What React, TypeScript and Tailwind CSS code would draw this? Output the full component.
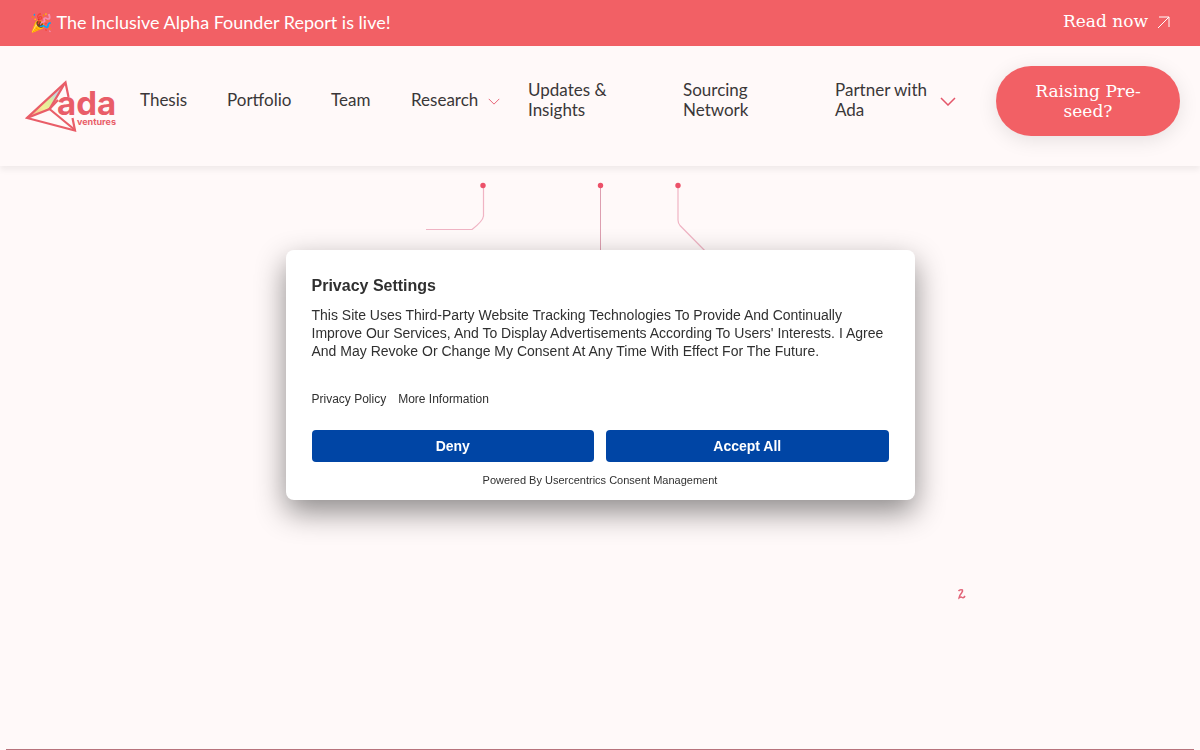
import React from 'react';

const plainLinks = [
    { label: 'Thesis', width: 'w-[47px]' },
    { label: 'Portfolio', width: 'w-16' },
    { label: 'Team', width: 'w-10' },
];

const Logo: React.FC = () => (
    <svg viewBox="0 0 92 52" className="h-[52px] w-[92px]" role="img" aria-label="Ada Ventures">
        <defs>
            <linearGradient id="facet" x1="0" y1="1" x2="1" y2="0">
                <stop offset="0.1" stopColor="#f7b48c" />
                <stop offset="0.35" stopColor="#f3ee98" />
                <stop offset="0.55" stopColor="#d9f09c" />
                <stop offset="0.7" stopColor="#c3d8df" />
                <stop offset="1" stopColor="#e9b6c4" />
            </linearGradient>
        </defs>
        <path d="M2 38 L40 2 L24 30 Z" fill="url(#facet)" />
        <g fill="none" stroke="#e95d68" strokeWidth="2.2" strokeLinejoin="miter">
            <path d="M43.5 17 L40.5 2.5 L2 38 L50 50.5 L47.5 38" />
            <path d="M40 3 L24.5 29 L2 38" />
            <path d="M33 20 L24.5 29 L50 50" />
        </g>
        <text x="32" y="35" fill="#e95d68" fontFamily="Inter, sans-serif" fontWeight="700" fontSize="33">ada</text>
        <text x="52" y="45" fill="#e95d68" fontFamily="Inter, sans-serif" fontWeight="700" fontSize="9">ventures</text>
    </svg>
);

const Chevron: React.FC<{ className: string; strokeWidth: number }> = ({ className, strokeWidth }) => (
    <svg viewBox="0 0 16 9" className={className} fill="none" stroke="#e4566a" strokeWidth={strokeWidth} aria-hidden="true">
        <path d="M1 1 L8 8 L15 1" />
    </svg>
);

const Banner: React.FC = () => (
    <div className="flex h-[46px] items-center justify-between bg-[#f26065] px-[30px] pb-[2px] text-white">
        <p className="font-['Lato','Noto_Color_Emoji',sans-serif] text-[18px]">🎉 The Inclusive Alpha Founder Report is live!</p>
        <a href="#report" className="flex items-center gap-[9px] font-['DejaVu_Serif',serif] text-[17px]">
            Read now
            <svg viewBox="0 0 13 13" className="size-[13px]" fill="none" stroke="currentColor" aria-hidden="true">
                <path d="M1 12 L12 1 M2 1 H12 V11" />
            </svg>
        </a>
    </div>
);

const Header: React.FC = () => (
    <header className="relative flex h-[120px] items-start bg-[#fff9f9] pl-[25px] pr-5 shadow-[0_4px_6px_rgba(0,0,0,0.06)]">
        <a href="#home" className="mt-[34px] mr-[23px] shrink-0">
            <Logo />
        </a>
        <nav className="mt-[34px] flex h-10 flex-1 items-center gap-10 font-['Lato',sans-serif] text-[17px] leading-5 text-[#3a3738]">
            {plainLinks.map((link) => (
                <a key={link.label} href={`#${link.label.toLowerCase()}`} className={`${link.width} shrink-0`}>
                    {link.label}
                </a>
            ))}
            <button type="button" className="flex w-[77px] shrink-0 items-center gap-[10px]">
                Research
                <Chevron className="mt-[2px] h-[7px] w-3 shrink-0" strokeWidth={1.2} />
            </button>
            <a href="#updates" className="w-[115px] shrink-0">Updates &amp;<br />Insights</a>
            <a href="#sourcing" className="w-28 shrink-0">Sourcing<br />Network</a>
            <button type="button" className="flex flex-1 items-center justify-between text-left">
                <span>Partner with<br />Ada</span>
                <Chevron className="mt-[2px] h-[9px] w-4 shrink-0" strokeWidth={1.5} />
            </button>
        </nav>
        <a
            href="#raise"
            className="mt-5 ml-10 flex h-[70px] w-[184px] shrink-0 items-center justify-center rounded-full bg-[#f26065] text-center font-['DejaVu_Serif',serif] text-[17px] leading-5 text-white shadow-[0_4px_20px_rgba(0,0,0,0.1)]"
        >
            Raising Pre-<br />seed?
        </a>
    </header>
);

const Hero: React.FC = () => (
    <main className="relative flex flex-1 flex-col justify-between">
        <svg viewBox="0 0 640 320" className="mx-auto mt-[14px] h-80 w-[640px]" fill="none" aria-hidden="true">
            <g stroke="#f0b4c4" strokeWidth="1.2">
                <path d="M203.5 6 V36 Q203 41 192 49.5 H146" />
                <path d="M398 6 V40 Q398 43 400 45.5 L430 76" />
                <path d="M320.5 6 V100" stroke="#dd9fb0" strokeWidth="1" />
            </g>
            <g fill="#ec5169">
                <circle cx="203" cy="5.5" r="2.7" />
                <circle cx="320.5" cy="5.5" r="2.7" />
                <circle cx="398" cy="5.5" r="2.7" />
            </g>
        </svg>
        <svg
            viewBox="0 0 9 12"
            className="absolute top-[422px] left-[80%] ml-[-3px] h-3 w-[9px]"
            fill="none"
            stroke="#e26478"
            strokeWidth="1.5"
            aria-hidden="true"
        >
            <path d="M1.5 3 Q3 1 5.5 2 Q6 3 4.5 5 Q2 8 2 10 Q4 8.5 5 9.5 Q6.5 10.5 8 8" />
        </svg>
        <hr className="mx-[6px] h-px border-0 bg-[#b8737c]" />
    </main>
);

const PrivacyDialog: React.FC = () => (
    <div className="fixed inset-0 flex items-center justify-center">
        <div
            role="dialog"
            aria-labelledby="privacy-title"
            className="w-[629px] rounded-lg bg-white px-[26px] pt-[26px] pb-3 font-['Liberation_Sans',sans-serif] text-[#303030] shadow-[0_12px_30px_rgba(0,0,0,0.45)]"
        >
            <h2 id="privacy-title" className="text-base leading-5 font-bold">Privacy Settings</h2>
            <p className="mt-[10px] text-sm leading-[18px]">
                This Site Uses Third-Party Website Tracking Technologies To Provide And Continually Improve Our Services, And To Display Advertisements According To Users' Interests. I Agree And May Revoke Or Change My Consent At Any Time With Effect For The Future.
            </p>
            <div className="mt-[31px] flex gap-3 text-xs leading-4">
                <a href="#privacy">Privacy Policy</a>
                <a href="#more">More Information</a>
            </div>
            <div className="mt-[23px] grid grid-cols-2 gap-3 text-sm font-bold text-white">
                <button type="button" className="h-8 rounded bg-[#0045a5]">Deny</button>
                <button type="button" className="h-8 rounded bg-[#0045a5]">Accept All</button>
            </div>
            <p className="mt-[10px] text-center text-[11px] leading-4">
                Powered By <a href="#usercentrics">Usercentrics Consent Management</a>
            </p>
        </div>
    </div>
);

const App: React.FC = () => {
    return (
        <div className="flex min-h-screen flex-col bg-[#fff9f9]">
            <Banner />
            <Header />
            <Hero />
            <PrivacyDialog />
        </div>
    );
};

export default App;
